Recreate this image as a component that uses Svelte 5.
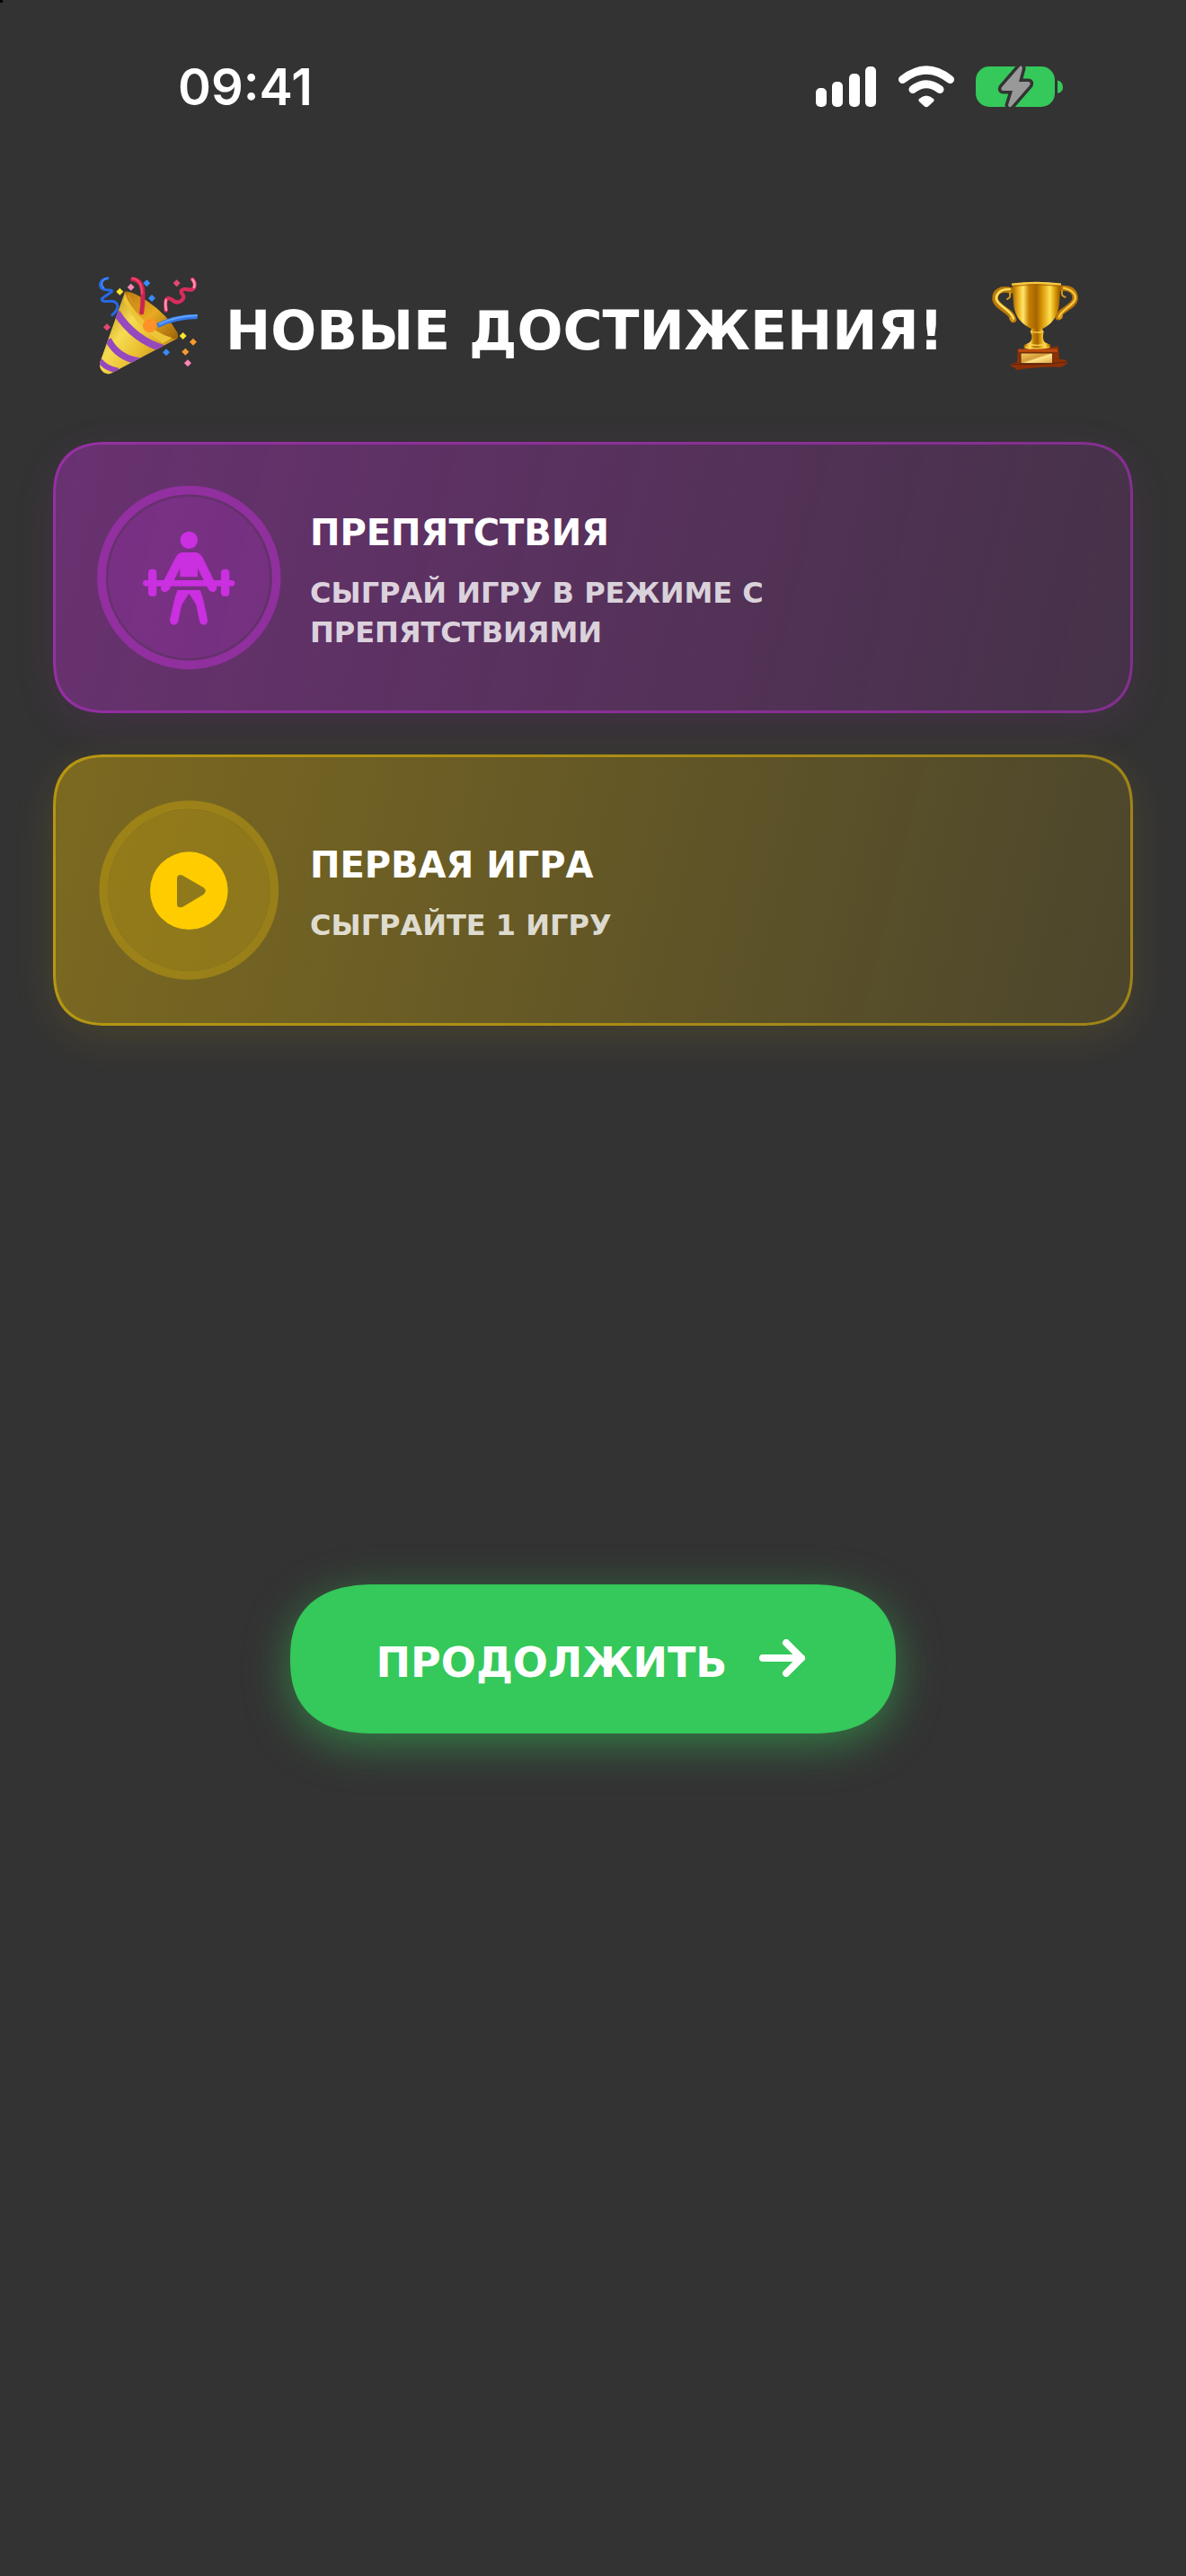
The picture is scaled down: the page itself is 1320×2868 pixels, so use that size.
<script lang="ts">
  type Achievement = {
    kind: 'obstacles' | 'first-game';
    title: string;
    description: string;
  };

  const achievements: Achievement[] = [
    {
      kind: 'obstacles',
      title: 'ПРЕПЯТСТВИЯ',
      description: 'СЫГРАЙ ИГРУ В РЕЖИМЕ С ПРЕПЯТСТВИЯМИ'
    },
    {
      kind: 'first-game',
      title: 'ПЕРВАЯ ИГРА',
      description: 'СЫГРАЙТЕ 1 ИГРУ'
    }
  ];
</script>

<div class="screen">
  <div class="status-bar">
    <span class="time">09:41</span>
    <div class="indicators">
      <svg width="68" height="48" viewBox="0 0 68 48" fill="#fff" aria-hidden="true">
        <rect x="0" y="25" width="12" height="21" rx="5" />
        <rect x="18" y="18" width="12" height="28" rx="5" />
        <rect x="37" y="9" width="12" height="37" rx="5" />
        <rect x="55" y="1" width="12" height="45" rx="5" />
      </svg>
      <svg width="62" height="48" viewBox="0 0 62 48" fill="none" stroke="#fff" stroke-linecap="round" aria-hidden="true">
        <path d="M4.5 15.5 Q31 -5.5 57.5 15.5" stroke-width="9" />
        <path d="M16 26.5 Q31 15 46 26.5" stroke-width="9" />
        <path d="M23 37 Q31 30 39 37 Q40.5 38.5 38.5 40.5 L33 45.5 Q31 47 29 45.5 L23.5 40.5 Q21.5 38.5 23 37Z" fill="#fff" stroke="none" />
      </svg>
      <svg width="98" height="48" viewBox="0 0 98 48" aria-hidden="true">
        <rect x="0" y="1" width="88" height="45" rx="15" fill="#35c85a" />
        <path d="M91 16.5 Q97 18 97 24 Q97 29.5 91 31Z" fill="#35c85a" />
        <path d="M49 1 L29 24 Q27 28 31 28 H41 L36 44 Q37 48 40 45 L60 22 Q62 18 58 18 H48 L52 3 Q51 -1 49 1Z" fill="#999" stroke="#333" stroke-width="7" paint-order="stroke" stroke-linejoin="round" />
      </svg>
    </div>
  </div>

  <main>
    <header>
      <svg class="party" viewBox="60 50 336 336" aria-hidden="true">
        <defs>
          <linearGradient id="cone" x1="0" y1="0.3" x2="0.8" y2="0.9">
            <stop offset="0" stop-color="#c9961c" />
            <stop offset="0.35" stop-color="#f6dc52" />
            <stop offset="0.65" stop-color="#eabf30" />
            <stop offset="1" stop-color="#c48a14" />
          </linearGradient>
          <linearGradient id="mouth" x1="0" y1="0" x2="1" y2="1">
            <stop offset="0" stop-color="#b9770d" />
            <stop offset="0.5" stop-color="#e8ab22" />
            <stop offset="1" stop-color="#9d6308" />
          </linearGradient>
          <clipPath id="cone-clip">
            <path d="M150 108 L66 345 Q64 376 92 381 Q102 382 112 375 L326 262 Q250 235 150 108Z" />
          </clipPath>
        </defs>
        <path d="M150 108 L66 345 Q64 376 92 381 Q102 382 112 375 L326 262 Q250 235 150 108Z" fill="url(#cone)" />
        <g clip-path="url(#cone-clip)" fill="none" stroke="#9549bd">
          <path d="M122 176 Q182 270 284 298" stroke-width="25" />
          <path d="M94 266 Q126 328 198 338" stroke-width="22" />
          <path d="M66 336 Q88 364 128 370" stroke-width="18" />
        </g>
        <path d="M148 107 Q166 98 224 137 Q294 185 325 243 Q334 267 313 264 Q260 257 205 199 Q158 151 148 107Z" fill="url(#mouth)" />
        <path d="M151 112 Q162 151 209 198 Q260 250 307 260 L276 279 Q184 218 145 135Z" fill="#edc438" />
        <path d="M160 116 Q177 153 206 178" fill="none" stroke="#d3921b" stroke-width="8" />
        <g fill="none" stroke-linecap="round">
          <path d="M93 61 C65 64 61 90 78 98 C90 104 115 98 104 108 C84 123 62 131 79 138 C91 142 111 131 122 145 C132 159 118 175 108 184" stroke="#2869e4" stroke-width="9" />
          <path d="M92 62 C72 66 68 83 80 94" stroke="#458dff" stroke-width="5" />
          <path d="M176 64 Q211 68 210 119 Q210 152 206 176" stroke="#cc2450" stroke-width="15" />
          <path d="M176 62 Q206 66 207 112" stroke="#f0486c" stroke-width="6" />
          <path d="M375 65 C388 76 386 106 362 99 C344 94 330 103 343 116 C354 129 331 149 314 138 C293 121 281 123 287 169" stroke="#d72d5c" stroke-width="13" />
          <path d="M376 66 Q386 78 381 91 M288 167 Q284 145 287 134" stroke="#ff92ad" stroke-width="8" />
          <path d="M259 220 Q315 190 392 189" stroke="#3379e9" stroke-width="16" stroke-linecap="butt" />
          <path d="M264 215 Q319 188 392 186" stroke="#64a2ff" stroke-width="6" stroke-linecap="butt" />
        </g>
        <circle cx="233" cy="220" r="23" fill="#ff9129" />
        <path d="M133 94l12 12-12 12-12-12z M344 242l12 12-12 12-12-12z" fill="#f9e52c" />
        <path d="M170 79l12 12-12 12-12-12z M360 333l12 12-12 12-12-12z" fill="#f986b6" />
        <path d="M223 66l12 12-12 12-12-12z M240 116l12 12-12 12-12-12z M288 297l12 12-12 12-12-12z" fill="#388bf8" />
        <path d="M323 66l12 12-12 12-12-12z M90 213l12 12-12 12-12-12z" fill="#e34870" />
        <path d="M378 262l12 12-12 12-12-12z M352 295l12 12-12 12-12-12z" fill="#f79a2d" />
      </svg>
      <h1>НОВЫЕ ДОСТИЖЕНИЯ!</h1>
      <svg class="trophy" viewBox="64 52 294 336" aria-hidden="true">
        <defs>
          <linearGradient id="cup">
            <stop offset="0" stop-color="#a56500" />
            <stop offset="0.15" stop-color="#f3bb28" />
            <stop offset="0.23" stop-color="#ffe66c" />
            <stop offset="0.35" stop-color="#c67f00" />
            <stop offset="0.5" stop-color="#a66500" />
            <stop offset="0.62" stop-color="#d99808" />
            <stop offset="0.78" stop-color="#ffe052" />
            <stop offset="0.9" stop-color="#d19100" />
            <stop offset="1" stop-color="#8e5400" />
          </linearGradient>
          <linearGradient id="plate" x1="0" y1="0" x2="1" y2="1">
            <stop offset="0" stop-color="#f5cc61" />
            <stop offset="0.45" stop-color="#d49b36" />
            <stop offset="0.55" stop-color="#ffe48a" />
            <stop offset="1" stop-color="#d6a141" />
          </linearGradient>
        </defs>
        <g fill="none" stroke-linecap="round">
          <path d="M130 104 C94 95 76 111 78 132 C80 161 135 172 139 202" stroke="#b87a08" stroke-width="20" />
          <path d="M126 100 C93 99 80 117 82 134 C90 159 130 167 139 198" stroke="#ffdf5d" stroke-width="8" />
          <path d="M118 133 Q132 128 126 111 M139 204 Q130 207 128 196" stroke="#d99b19" stroke-width="6" />
          <path d="M300 97 C333 94 346 111 345 132 C342 160 290 169 289 194" stroke="#b97607" stroke-width="19" />
          <path d="M307 96 C337 103 350 119 344 136 C333 159 294 172 291 194" stroke="#f7c943" stroke-width="7" />
          <path d="M312 126 Q298 124 301 107 M290 196 Q299 201 301 188" stroke="#d99b19" stroke-width="6" />
        </g>
        <path d="M134 83 Q215 70 297 83 L292 148 Q287 209 232 234 H203 Q148 211 140 157Z" fill="url(#cup)" />
        <path d="M133 84 Q215 73 298 84" fill="none" stroke="#f6c742" stroke-width="7" />
        <path d="M138 90 Q215 80 294 90" fill="none" stroke="#a96705" stroke-width="3" />
        <path d="M200 231 H234 L240 242 Q234 266 243 277 L263 286 V298 Q217 309 174 298 V287 L193 278 Q207 262 195 242Z" fill="url(#cup)" />
        <path d="M198 241 Q216 248 238 241 M188 283 Q219 292 248 283 M178 294 Q219 302 259 294" fill="none" stroke="#f8ce4f" stroke-width="4" />
        <path d="M154 298 Q216 309 288 290 L292 333 L314 336 Q321 345 315 350 L301 360 Q220 357 148 370 L143 361 Q128 362 130 350 L151 345Z" fill="#8c3106" />
        <path d="M155 300 H286 V309 H155Z" fill="#bd4c0d" />
        <path d="M132 351 Q220 355 314 344" fill="none" stroke="#61200a" stroke-width="3" />
        <rect x="163" y="313" width="107" height="35" fill="url(#plate)" stroke="#5f260d" stroke-width="3" />
      </svg>
    </header>

    <ul class="achievements">
      {#each achievements as achievement}
        <li class="card {achievement.kind}">
          <svg class="badge" viewBox="201 210 618 618" fill="currentColor" aria-hidden="true">
            {#if achievement.kind === 'obstacles'}
              <circle cx="511" cy="519" r="292" fill="none" stroke="currentColor" stroke-width="29" opacity="0.45" />
              <circle cx="511" cy="519" r="270" opacity="0.2" />
              <circle cx="511" cy="394" r="29" />
              <path d="M491 435 H531 Q547 435 557 452 L603 547 Q606 562 594 567 Q583 570 576 559 L540 488 V517 H481 V488 L446 558 Q437 571 426 567 Q413 561 418 546 L466 452 Q475 435 491 435Z" />
              <rect x="357" y="528" width="307" height="20" rx="10" />
              <rect x="375" y="491" width="28" height="91" rx="12" />
              <rect x="618" y="491" width="28" height="91" rx="12" />
              <path d="M473 561 H548 Q557 581 561 603 L573 660 Q574 676 560 677 Q549 677 546 664 L535 610 L511 572 L487 610 L475 664 Q472 677 461 677 Q447 676 447 660 L460 603 Q464 581 473 561Z" />
            {:else}
              <circle cx="511" cy="519" r="285" fill="none" stroke="currentColor" stroke-width="29" opacity="0.28" />
              <circle cx="511" cy="519" r="270" opacity="0.2" />
              <path fill-rule="evenodd" d="M511 391 a130 130 0 1 0 0 260 a130 130 0 1 0 0 -260Z M471 482 Q471 468 483 468 L490 470 L560 511 Q573 521 560 533 L490 575 Q471 582 471 565Z" />
            {/if}
          </svg>
          <div class="card-text">
            <h2>{achievement.title}</h2>
            <p>{achievement.description}</p>
          </div>
        </li>
      {/each}
    </ul>

    <button class="continue" type="button">
      <span>ПРОДОЛЖИТЬ</span>
      <svg width="52" height="42" viewBox="0 0 52 42" fill="none" stroke="currentColor" stroke-width="8" stroke-linecap="round" stroke-linejoin="round" aria-hidden="true">
        <path d="M4 21 H47 M30 4 L47 21 L30 38" />
      </svg>
    </button>
  </main>
</div>

<style>
  :global(body) {
    margin: 0;
    background: #333;
  }

  .screen {
    min-height: 100vh;
    color: #fff;
    font-family: 'DejaVu Sans', sans-serif;
    font-weight: 700;
    background: linear-gradient(#000, #000) 0 0 / 3px 3px no-repeat #333;
  }

  .status-bar {
    display: flex;
    align-items: center;
    justify-content: space-between;
    height: 194px;
    padding: 0 136px 0 198px;
  }

  .time {
    font-family: Inter, sans-serif;
    font-size: 56px;
    font-weight: 600;
  }

  .indicators {
    display: flex;
    align-items: center;
    gap: 24px;
  }

  main {
    display: flex;
    flex-direction: column;
    align-items: center;
    padding: 112px 59px;
  }

  header {
    align-self: stretch;
    display: flex;
    align-items: center;
    gap: 30px;
    margin-bottom: 74px;
    padding: 0 60px 0 50px;
  }

  .party {
    flex: none;
    width: 112px;
    height: 112px;
  }

  .trophy {
    flex: none;
    width: 98px;
    height: 112px;
    margin-left: auto;
  }

  h1,
  h2,
  p {
    margin: 0;
  }

  h1 {
    padding-top: 12px;
    font-size: 60px;
    line-height: 72px;
    white-space: nowrap;
  }

  .achievements {
    align-self: stretch;
    display: flex;
    flex-direction: column;
    gap: 46px;
    margin: 0;
    padding: 0;
    list-style: none;
  }

  .card {
    display: flex;
    align-items: center;
    gap: 32px;
    padding: 45px;
    border: 3px solid;
    border-radius: 60px;
    corner-shape: superellipse(1.3);
    background-origin: border-box;
  }

  .obstacles {
    border-color: rgba(202, 47, 224, 0.46);
    background-image: linear-gradient(104deg, rgba(202, 47, 224, 0.36), rgba(202, 47, 224, 0.12));
    box-shadow: 0 12px 48px rgba(202, 47, 224, 0.1);
  }

  .first-game {
    border-color: rgba(255, 204, 0, 0.46);
    background-image: linear-gradient(104deg, rgba(255, 204, 0, 0.36), rgba(255, 204, 0, 0.12));
    box-shadow: 0 12px 48px rgba(255, 204, 0, 0.1);
  }

  .badge {
    flex: none;
    width: 206px;
    height: 206px;
  }

  .obstacles .badge {
    color: #ca2fe0;
  }

  .first-game .badge {
    color: #fc0;
  }

  .card-text {
    max-width: 640px;
    padding-top: 10px;
  }

  h2 {
    margin-bottom: 22px;
    font-size: 40px;
    line-height: 46px;
  }

  p {
    color: rgba(255, 255, 255, 0.8);
    font-size: 32px;
    line-height: 44px;
  }

  .continue {
    display: flex;
    align-items: baseline;
    gap: 36px;
    margin-top: 622px;
    padding: 60px 100px 52px 96px;
    border: 0;
    border-radius: 96px / 83px;
    corner-shape: superellipse(1.3);
    background: #35c85a;
    box-shadow: 0 12px 48px rgba(53, 200, 90, 0.5);
    color: #fff;
    font: inherit;
    font-size: 46px;
    line-height: 54px;
    cursor: pointer;
  }
</style>
